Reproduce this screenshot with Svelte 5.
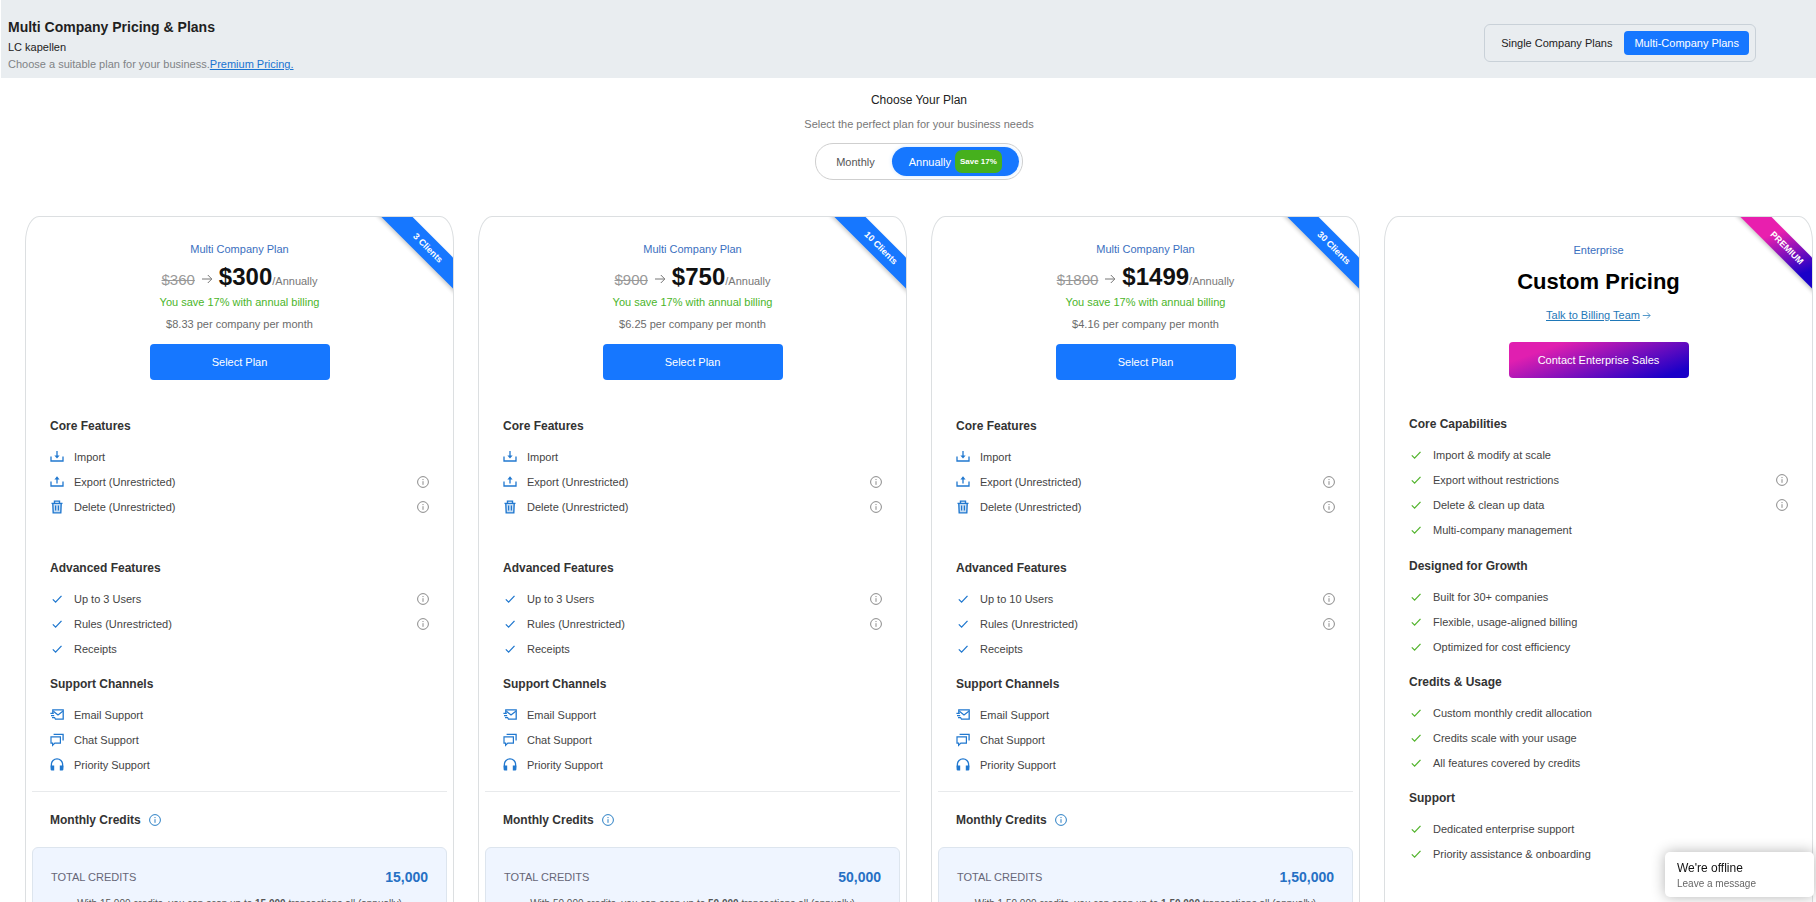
<script lang="ts">
	type Feature = { icon: string; label: string; info?: boolean };
	type Section = { title: string; items: Feature[]; tall?: boolean };

	const planData = [
		{ clients: '3 Clients', was: '$360', price: '$300', per: '$8.33', users: 3, credits: '15,000' },
		{ clients: '10 Clients', was: '$900', price: '$750', per: '$6.25', users: 3, credits: '50,000' },
		{ clients: '30 Clients', was: '$1800', price: '$1499', per: '$4.16', users: 10, credits: '1,50,000' }
	];

	const sectionsFor = (users: number): Section[] => [
		{
			title: 'Core Features',
			tall: true,
			items: [
				{ icon: 'import', label: 'Import' },
				{ icon: 'export', label: 'Export (Unrestricted)', info: true },
				{ icon: 'trash', label: 'Delete (Unrestricted)', info: true }
			]
		},
		{
			title: 'Advanced Features',
			items: [
				{ icon: 'check', label: `Up to ${users} Users`, info: true },
				{ icon: 'check', label: 'Rules (Unrestricted)', info: true },
				{ icon: 'check', label: 'Receipts' }
			]
		},
		{
			title: 'Support Channels',
			items: [
				{ icon: 'mail', label: 'Email Support' },
				{ icon: 'chat', label: 'Chat Support' },
				{ icon: 'headset', label: 'Priority Support' }
			]
		}
	];

	const check = (label: string, info = false): Feature => ({ icon: 'check', label, info });

	const enterprise: Section[] = [
		{
			title: 'Core Capabilities',
			tall: true,
			items: [
				check('Import & modify at scale'),
				check('Export without restrictions', true),
				check('Delete & clean up data', true),
				check('Multi-company management')
			]
		},
		{
			title: 'Designed for Growth',
			items: [
				check('Built for 30+ companies'),
				check('Flexible, usage-aligned billing'),
				check('Optimized for cost efficiency')
			]
		},
		{
			title: 'Credits & Usage',
			items: [
				check('Custom monthly credit allocation'),
				check('Credits scale with your usage'),
				check('All features covered by credits')
			]
		},
		{
			title: 'Support',
			items: [check('Dedicated enterprise support'), check('Priority assistance & onboarding')]
		}
	];

	let scope = $state('multi');
	let billing = $state('annually');
</script>

{#snippet icon(name: string)}
	<svg class="icon" viewBox="0 0 14 14" fill="none" stroke="currentColor" aria-hidden="true">
		{#if name === 'import'}
			<path d="M1 6.5V11h12V6.5" stroke-width="1.3" />
			<path d="M7 1v6" stroke-width="1.3" />
			<path d="M4.4 5.4h5.2L7 8.6z" fill="currentColor" stroke="none" />
		{:else if name === 'export'}
			<path d="M1 6.5V11h12V6.5" stroke-width="1.3" />
			<path d="M7 3.4v5.2" stroke-width="1.3" />
			<path d="M4.4 4.4h5.2L7 1.2z" fill="currentColor" stroke="none" />
		{:else if name === 'trash'}
			<path d="M3 3.6h8l-.4 9.3H3.4z" fill="currentColor" fill-opacity="0.25" stroke="none" />
			<path d="M1.5 3.4h11M4.5 3.2V1.1h5v2.1M2.8 3.6l.4 9.3h7.6l.4-9.3" stroke-width="1.4" />
			<path d="M5.6 5.6v5M8.4 5.6v5" stroke-width="1.2" />
		{:else if name === 'check'}
			<path d="M2.8 7.4l2.8 2.7 5.9-6.2" stroke-width="1.3" />
		{:else if name === 'mail'}
			<path d="M2.8 5V1.8h10.4v9.4H5.4" stroke-width="1.3" />
			<path d="M3.4 3.2L8 7l4.8-3.8M.4 5.4h3.4M1 7.6h3.2M2 9.6h2.6l1 2" stroke-width="1.2" />
		{:else if name === 'chat'}
			<path d="M1 3.8h9.4v6.4H4.8L2.6 12.4v-2.2H1z" stroke-width="1.2" />
			<path d="M3.6 1.4h9.5v6.2" stroke-width="1.3" />
		{:else if name === 'headset'}
			<path d="M1.4 9.4V6.4a5.6 5.6 0 0 1 11.2 0v3" stroke-width="1.3" />
			<path d="M.6 7.4h3.6v5H1.8Q.6 12.4.6 11.2zM9.8 7.4h3.6v3.8q0 1.2-1.2 1.2H9.8z" fill="currentColor" stroke="none" />
		{/if}
	</svg>
{/snippet}

{#snippet infoIcon()}
	<svg class="info" viewBox="0 0 12 12" fill="none" stroke="currentColor" aria-hidden="true">
		<circle cx="6" cy="6" r="5.4" />
		<path d="M6 5.2v3.6M6 3v1.1" />
	</svg>
{/snippet}

{#snippet arrow()}
	<svg class="arrow" viewBox="0 0 12 12" fill="none" stroke="currentColor" aria-hidden="true">
		<path d="M1 6h9.6M6.8 2l4 4-4 4" />
	</svg>
{/snippet}

{#snippet featureList(sections: Section[])}
	<div class="sections">
		{#each sections as section}
			<section>
				<h3>{section.title}</h3>
				<ul class:tall={section.tall}>
					{#each section.items as item}
						<li>
							{@render icon(item.icon)}
							<span>{item.label}</span>
							{#if item.info}
								<button class="info-btn" aria-label="About {item.label}">{@render infoIcon()}</button>
							{/if}
						</li>
					{/each}
				</ul>
			</section>
		{/each}
	</div>
{/snippet}

<div class="page">
	<header>
		<div class="heading">
			<h1>Multi Company Pricing &amp; Plans</h1>
			<p class="company">LC kapellen</p>
			<p class="lead">Choose a suitable plan for your business.<a href="#premium">Premium Pricing.</a></p>
		</div>
		<div class="scope">
			<button class:active={scope === 'single'} onclick={() => (scope = 'single')}>Single Company Plans</button>
			<button class:active={scope === 'multi'} onclick={() => (scope = 'multi')}>Multi-Company Plans</button>
		</div>
	</header>

	<div class="chooser">
		<h2>Choose Your Plan</h2>
		<p>Select the perfect plan for your business needs</p>
		<div class="billing">
			<button class:active={billing === 'monthly'} onclick={() => (billing = 'monthly')}>Monthly</button>
			<button class:active={billing === 'annually'} onclick={() => (billing = 'annually')}>
				Annually <span class="save">Save 17%</span>
			</button>
		</div>
	</div>

	<main>
		{#each planData as plan}
			<article class="card">
				<div class="ribbon"><span>{plan.clients}</span></div>
				<div class="top">
					<p class="name">Multi Company Plan</p>
					<div class="price">
						<s>{plan.was}</s>
						{@render arrow()}
						<strong>{plan.price}</strong><span>/Annually</span>
					</div>
					<p class="saving">You save 17% with annual billing</p>
					<p class="per">{plan.per} per company per month</p>
					<button class="cta">Select Plan</button>
				</div>
				{@render featureList(sectionsFor(plan.users))}
				<div class="credits">
					<h3>
						Monthly Credits
						<button class="info-btn" aria-label="About monthly credits">{@render infoIcon()}</button>
					</h3>
				</div>
				<div class="credit-box">
					<div class="total">
						<span>TOTAL CREDITS</span>
						<strong>{plan.credits}</strong>
					</div>
					<p>
						With {plan.credits} credits, you can scan up to <b>{plan.credits}</b> transactions all (annually)
					</p>
				</div>
			</article>
		{/each}

		<article class="card enterprise">
			<div class="ribbon"><span>PREMIUM</span></div>
			<div class="top">
				<p class="name">Enterprise</p>
				<p class="custom">Custom Pricing</p>
				<a class="talk" href="#billing">Talk to Billing Team {@render arrow()}</a>
				<button class="cta">Contact Enterprise Sales</button>
			</div>
			{@render featureList(enterprise)}
		</article>
	</main>

	<aside class="offline">
		<strong>We're offline</strong>
		<span>Leave a message</span>
	</aside>
</div>

<style>
	:global(body) {
		margin: 0;
		background: #fff;
	}

	.page {
		height: 100vh;
		overflow: hidden;
		font-family: 'Liberation Sans', Arial, sans-serif;
		font-size: 11px;
		line-height: 16px;
		color: #444;
	}

	h1,
	h2,
	h3,
	p,
	ul {
		margin: 0;
		padding: 0;
	}

	button {
		font: inherit;
		color: inherit;
		background: none;
		border: 0;
		padding: 0;
		cursor: pointer;
	}

	a {
		color: #1a73d1;
	}

	header {
		display: flex;
		justify-content: space-between;
		align-items: center;
		height: 78px;
		box-sizing: border-box;
		margin-left: 1px;
		padding: 8px 60px 0 7px;
		background: #e9edf0;
	}

	.heading {
		padding-top: 2px;
	}

	h1 {
		font-size: 14px;
		line-height: 22px;
		color: #1f1f1f;
	}

	.company {
		line-height: 18px;
		color: #222;
	}

	.lead {
		color: #808386;
	}

	.scope {
		display: flex;
		gap: 2px;
		padding: 6px;
		border: 1px solid #c9d1d8;
		border-radius: 6px;
	}

	.scope button {
		height: 24px;
		padding: 0 10px;
		border-radius: 4px;
		color: #222;
	}

	.scope button.active {
		background: #1677ff;
		color: #fff;
	}

	.chooser {
		display: flex;
		flex-direction: column;
		align-items: center;
		padding: 12px 0 36px 22px;
	}

	h2 {
		font-size: 12px;
		font-weight: 400;
		line-height: 20px;
		color: #222;
	}

	.chooser p {
		margin: 6px 0 11px;
		color: #777;
	}

	.billing {
		display: flex;
		padding: 3px;
		border: 1px solid #cfcfcf;
		border-radius: 18px;
	}

	.billing button {
		display: flex;
		align-items: center;
		gap: 4px;
		height: 29px;
		padding: 0 17px;
		border-radius: 15px;
		color: #555;
	}

	.billing button.active {
		background: #1677ff;
		color: #fff;
		box-shadow: 0 0 4px #cfe4ff;
	}

	.save {
		padding: 0 5px;
		border-radius: 7px;
		background: #46b01d;
		font-size: 8px;
		font-weight: 700;
		line-height: 23px;
	}

	main {
		display: grid;
		grid-template-columns: repeat(4, 1fr);
		gap: 24px;
		padding: 0 3px 0 25px;
	}

	.card {
		position: relative;
		overflow: hidden;
		box-sizing: border-box;
		min-width: 0;
		padding: 0 6px 24px;
		border: 1px solid #dcdfe1;
		border-radius: 14px / 26px;
	}

	/* diagonal band over the top right corner */
	.ribbon {
		position: absolute;
		top: 20px;
		right: -35px;
		width: 120px;
		transform: rotate(45deg);
		background: #1677ff;
		box-shadow: 0 2px 4px rgba(0, 0, 0, 0.2);
		color: #fff;
		font-size: 9px;
		font-weight: 700;
		line-height: 22px;
		text-align: center;
	}

	.top {
		display: flex;
		flex-direction: column;
		align-items: center;
		padding-top: 24px;
	}

	.name {
		color: #3a6fc0;
	}

	.price {
		display: flex;
		align-items: baseline;
		height: 28px;
		margin-top: 6px;
		color: #777;
		line-height: 28px;
	}

	.price s {
		font-size: 15px;
		color: #999;
	}

	.arrow {
		width: 12px;
		height: 12px;
	}

	.price .arrow {
		align-self: center;
		margin: 4px 6px 0;
	}

	.price strong {
		font-size: 24px;
		color: #111;
	}

	.saving {
		margin-top: 3px;
		color: #4bb52a;
	}

	.per {
		margin: 6px 0 12px;
		color: #6b6b6b;
	}

	.cta {
		width: 180px;
		height: 36px;
		border-radius: 4px;
		background: #1677ff;
		color: #fff;
	}

	.sections {
		display: flex;
		flex-direction: column;
		gap: 13px;
		padding: 36px 18px 14px;
	}

	h3 {
		font-size: 12px;
		line-height: 20px;
		color: #333;
	}

	ul {
		margin-top: 8px;
		list-style: none;
	}

	ul.tall {
		min-height: 101px;
	}

	li {
		display: flex;
		align-items: center;
		height: 25px;
	}

	.icon {
		width: 14px;
		height: 14px;
		margin-right: 10px;
		color: #2178cf;
	}

	.info-btn {
		display: flex;
		margin-left: auto;
		color: #8a8a8a;
	}

	.info {
		width: 12px;
		height: 12px;
	}

	.credits {
		padding: 18px 18px 17px;
		border-top: 1px solid #e8eaec;
	}

	.credits h3 {
		display: flex;
		align-items: center;
		gap: 8px;
	}

	.credits .info-btn {
		margin: 0;
		color: #2b7fc4;
	}

	.credit-box {
		padding: 19px 18px;
		border: 1px solid #dde5ee;
		border-radius: 6px;
		background: #eff5ff;
	}

	.total {
		display: flex;
		justify-content: space-between;
		align-items: center;
		line-height: 20px;
		color: #667;
	}

	.total strong {
		font-size: 14px;
		color: #2670c4;
	}

	.credit-box p {
		margin-top: 9px;
		font-size: 10px;
		text-align: center;
		color: #555;
	}

	.enterprise .top {
		padding-top: 25px;
	}

	.custom {
		margin-top: 10px;
		font-size: 22px;
		font-weight: 700;
		line-height: 28px;
		color: #000;
	}

	.talk {
		display: flex;
		align-items: center;
		margin: 11px 0 19px;
		gap: 2px;
		color: #1f78b8;
		text-decoration: underline;
	}

	.talk .arrow {
		width: 9px;
		height: 9px;
	}

	.enterprise .cta {
		background: linear-gradient(160deg, #e01fb0 20%, #1a00c8 90%);
	}

	.enterprise .ribbon {
		background: linear-gradient(115deg, #e81fae 35%, #1a00c8 75%);
	}

	.enterprise .icon {
		color: #55b530;
	}

	.offline {
		position: fixed;
		right: 2px;
		bottom: 5px;
		display: flex;
		flex-direction: column;
		box-sizing: border-box;
		width: 149px;
		height: 45px;
		padding: 8px 12px;
		border-radius: 5px;
		background: #fff;
		box-shadow: 0 0 14px rgba(0, 0, 0, 0.3);
	}

	.offline strong {
		font-size: 12px;
		font-weight: 400;
		color: #111;
	}

	.offline span {
		font-size: 10px;
		color: #666;
	}
</style>
